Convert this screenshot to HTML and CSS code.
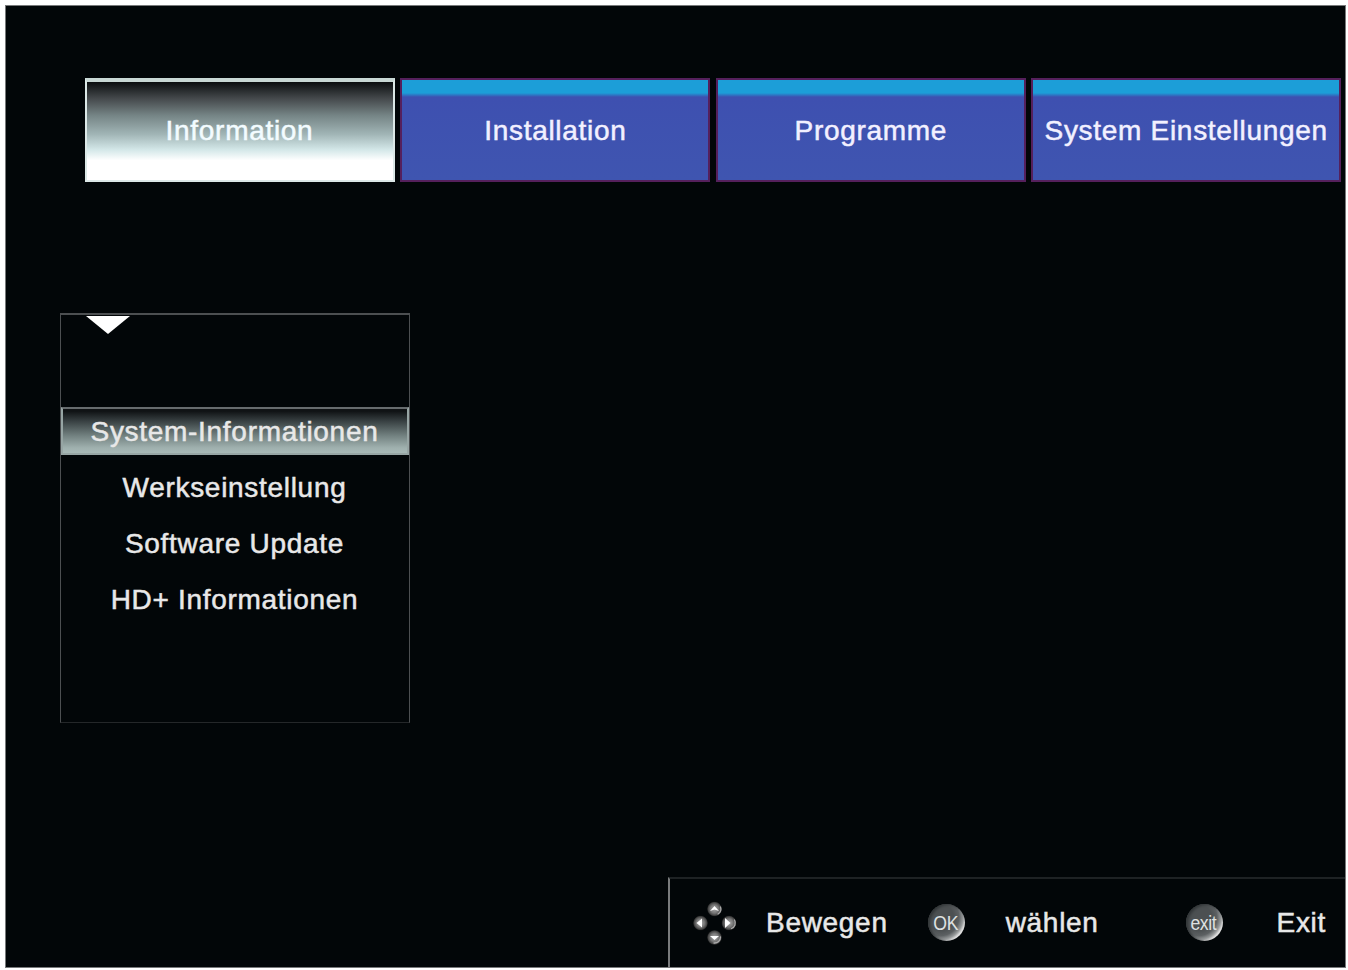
FILE: index.html
```
<!DOCTYPE html>
<html lang="de">
<head>
    <meta charset="UTF-8">
    <title>Hauptmenü</title>
    <meta name="viewport" content="width=device-width, initial-scale=1.0">
    <link rel="stylesheet" href="styles.css">
</head>
<body>
<div class="screen">
    <nav class="tabs">
        <div class="tab active">Information</div>
        <div class="tab">Installation</div>
        <div class="tab">Programme</div>
        <div class="tab">System Einstellungen</div>
    </nav>

    <main class="content">
        <div class="menu">
            <svg class="arrow" width="44" height="18" viewBox="0 0 44 18">
                <path d="M0 0H44L22 18Z" fill="#fff"/>
            </svg>
            <ul class="menu-list">
                <li class="menu-item selected">System-Informationen</li>
                <li class="menu-item">Werkseinstellung</li>
                <li class="menu-item">Software Update</li>
                <li class="menu-item">HD+ Informationen</li>
            </ul>
        </div>
    </main>

    <footer class="help">
        <svg class="dpad" width="44" height="44" viewBox="0 0 44 44">
            <defs>
                <radialGradient id="ball" cx="0.5" cy="0.5" r="0.5">
                    <stop offset="0" stop-color="#aaa"/>
                    <stop offset="0.55" stop-color="#777"/>
                    <stop offset="0.85" stop-color="#444"/>
                    <stop offset="1" stop-color="#0c0e0f"/>
                </radialGradient>
            </defs>
            <g fill="url(#ball)">
                <circle cx="21.500" cy="8" r="7.500"/>
                <circle cx="7.500" cy="22" r="7.500"/>
                <circle cx="36" cy="22" r="7.500"/>
                <circle cx="21.500" cy="36.500" r="7.500"/>
            </g>
            <g fill="#fff">
                <path d="M21.500 5L26 10L21.500 8.500L17 10Z"/>
                <path d="M3.500 22L9 17.500V26.500Z"/>
                <path d="M37.500 22L32 17V27Z"/>
                <path d="M21.500 39L17 35H26Z"/>
            </g>
            <g fill="none" stroke="#aaa" stroke-width="1.300" stroke-linecap="round">
                <path d="M27.500 6A6 6 0 0 1 25 13"/>
                <path d="M41.500 19A6 6 0 0 1 38.500 27.500"/>
                <path d="M27.500 36A6 6 0 0 1 21 42"/>
            </g>
        </svg>
        <span class="help-text move">Bewegen</span>
        <span class="key ok"><span class="key-label">OK</span></span>
        <span class="help-text choose">wählen</span>
        <span class="key exit"><span class="key-label">exit</span></span>
        <span class="help-text">Exit</span>
    </footer>
</div>
</body>
</html>
```

FILE: styles.css
```
* {
    box-sizing: border-box;
}

body {
    margin: 0;
    padding: 5px 2px 2px 5px;
    width: 1348px;
    height: 970px;
    background: #fff;
    overflow: hidden;
    font-family: "Liberation Sans", Arial, sans-serif;
    font-size: 28px;
    letter-spacing: 0.7px;
    color: #e8e8e8;
    -webkit-text-stroke: 0.5px currentColor;
}

.screen {
    display: flex;
    flex-direction: column;
    width: 1341px;
    height: 963px;
    background: #020608;
    border: 1px solid #77797a;
}

/* top tabs */
.tabs {
    display: grid;
    grid-template-columns: repeat(4, 310px);
    gap: 5.4px;
    margin: 72px 0 0 79px;
    height: 104px;
}

.tab {
    display: flex;
    align-items: center;
    justify-content: center;
    padding-top: 1px;
    border: 2px solid #55205c;
    background: linear-gradient(#1c9ed8 0 13px, #3e50b0 17px, #3f55b0 100%);
    color: #f2f0ff;
    white-space: nowrap;
}

.tab.active {
    border: 2px solid #dce8e7;
    border-top: 4px solid #c8d8d5;
    padding: 0 1px 1px 0;
    background: linear-gradient(#0b0e10 0, #45494c 17%, #758485 34%, #a0b4b5 53%, #d3e7e8 69%, #fff 80%);
    color: #f3fcff;
}

/* left menu */
.content {
    flex: 1;
    padding: 131px 0 0 54px;
}

.menu {
    width: 350px;
    height: 410px;
    border: 1px solid #4c4f51;
    border-width: 2px 1px 1px 1px;
    border-bottom-color: #242729;
}

.arrow {
    display: block;
    margin: 1px 0 0 25px;
}

.menu-list {
    list-style: none;
    margin: 73px 0 0;
    padding: 0;
}

.menu-item {
    height: 56px;
    padding-right: 1px;
    line-height: 58px;
    text-align: center;
}

.menu-item.selected {
    height: 48px;
    line-height: 46px;
    margin-bottom: 4px;
    border: 2px solid #97a5a4;
    border-top-color: #666b6d;
    background: linear-gradient(#101315 5%, #394143 28%, #71807f 60%, #9fb0ae 88%, #a7b9b6 100%);
}

/* bottom key help */
.help {
    display: flex;
    align-items: center;
    align-self: flex-end;
    width: 677px;
    height: 90px;
    padding: 0 19px 1px 23px;
    border-top: 2px solid #1e2224;
    border-left: 2px solid #797b7c;
}

.help-text {
    line-height: 32px;
}

.move {
    margin-left: 29px;
}

.choose {
    margin-left: 41px;
}

.key {
    display: flex;
    align-items: center;
    justify-content: center;
    width: 37px;
    height: 37px;
    border-radius: 50%;
    background: radial-gradient(circle at 34% 36%, #4c5052 0 38%, #5c6062 54%, #989b9c 66%, #e2e2e2 74%);
    box-shadow: inset 2px 1px 3px #303436;
    letter-spacing: -0.5px;
    color: #dfe1e1;
    -webkit-text-stroke: 0;
}

.key-label {
    margin-right: 2px;
    transform: scaleX(0.84);
}

.ok {
    margin-left: 40px;
    font-size: 21px;
}

.exit {
    margin-left: auto;
    margin-right: 54px;
    font-size: 21px;
}
```
